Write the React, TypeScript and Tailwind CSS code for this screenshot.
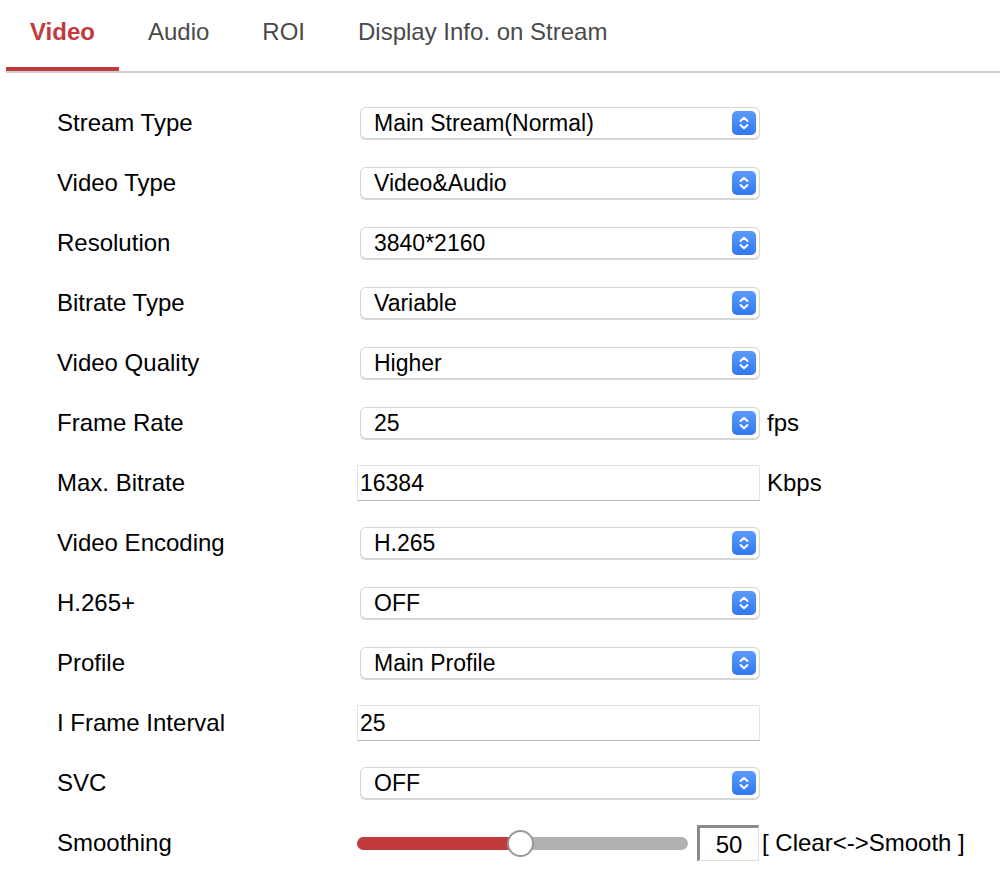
import React from "react";

const tabs = ["Video", "Audio", "ROI", "Display Info. on Stream"];

type Row =
  | { label: string; kind: "select"; value: string; unit?: string }
  | { label: string; kind: "input"; value: string; unit?: string }
  | { label: string; kind: "slider"; value: number };

const rows: Row[] = [
  { label: "Stream Type", kind: "select", value: "Main Stream(Normal)" },
  { label: "Video Type", kind: "select", value: "Video&Audio" },
  { label: "Resolution", kind: "select", value: "3840*2160" },
  { label: "Bitrate Type", kind: "select", value: "Variable" },
  { label: "Video Quality", kind: "select", value: "Higher" },
  { label: "Frame Rate", kind: "select", value: "25", unit: "fps" },
  { label: "Max. Bitrate", kind: "input", value: "16384", unit: "Kbps" },
  { label: "Video Encoding", kind: "select", value: "H.265" },
  { label: "H.265+", kind: "select", value: "OFF" },
  { label: "Profile", kind: "select", value: "Main Profile" },
  { label: "I Frame Interval", kind: "input", value: "25" },
  { label: "SVC", kind: "select", value: "OFF" },
  { label: "Smoothing", kind: "slider", value: 50 },
];

const Stepper = () => (
  <span className="flex h-[24px] w-[24px] items-center justify-center rounded-[5px] bg-gradient-to-b from-[#5b9bfa] to-[#2f78f0]">
    <svg width="12" height="16" viewBox="0 0 12 16" fill="none">
      <path d="M2.5 6 L6 2.8 L9.5 6" stroke="white" strokeWidth="2" strokeLinecap="round" strokeLinejoin="round" />
      <path d="M2.5 10 L6 13.2 L9.5 10" stroke="white" strokeWidth="2" strokeLinecap="round" strokeLinejoin="round" />
    </svg>
  </span>
);

const Select = ({ value }: { value: string }) => (
  <div className="ml-[3px] flex h-[32px] w-[400px] items-center justify-between rounded-[6px] border border-[#d6d6d6] bg-white pl-[13px] pr-[3px] text-[23px] text-black shadow-[0_1px_1px_rgba(0,0,0,0.18)]">
    <span>{value}</span>
    <Stepper />
  </div>
);

const TextInput = ({ value }: { value: string }) => (
  <div className="flex h-[36px] w-[403px] items-center border border-[#e3e3e3] border-b-[#b9b9b9] bg-white pl-[2px] text-[23px] text-black">
    {value}
  </div>
);

const Slider = ({ value }: { value: number }) => (
  <div className="flex items-center">
    <div className="relative h-[13px] w-[331px] rounded-full bg-[#b1b1b1]">
      <div className="absolute left-0 top-0 h-full w-[160px] rounded-full bg-[#c13b3d]" />
      <div className="absolute left-[150px] top-[-7px] h-[27px] w-[27px] rounded-full border-2 border-[#999] bg-white" />
    </div>
    <div className="ml-[9px] flex h-[36px] w-[62px] items-center justify-center border-l-[3px] border-t-[3px] border-r border-b border-l-[#8a8a8a] border-t-[#8a8a8a] border-r-[#dedede] border-b-[#dedede] bg-white pt-[1px] text-[24px] text-black">
      {value}
    </div>
    <span className="ml-[3px] text-[24px] text-black">[ Clear&lt;-&gt;Smooth ]</span>
  </div>
);

export default function App() {
  return (
    <div className="min-h-[892px] w-[1000px] bg-white" style={{ fontFamily: '"Liberation Sans", Arial, sans-serif' }}>
      <div className="ml-[6px] border-b-2 border-[#cfcfcf]">
        <div className="flex">
          {tabs.map((t, i) => (
            <div
              key={t}
              className={
                i === 0
                  ? "flex h-[71px] items-center border-b-4 border-[#c13b3d] px-[24px] pb-[4px] text-[24px] font-bold text-[#c13b3d]"
                  : "ml-[5px] flex h-[71px] items-center px-[24px] pb-[8px] text-[24px] text-[#4a4a4a]"
              }
            >
              {t}
            </div>
          ))}
        </div>
      </div>

      <div className="pt-[20px]">
        {rows.map((r) => (
          <div key={r.label} className="flex h-[60px] items-center">
            <div className="w-[357px] pl-[57px] text-[24px] text-black">{r.label}</div>
            {r.kind === "select" && <Select value={r.value} />}
            {r.kind === "input" && <TextInput value={r.value} />}
            {r.kind === "slider" && <Slider value={r.value} />}
            {"unit" in r && r.unit && (
              <span className="ml-[7px] text-[24px] text-black">{r.unit}</span>
            )}
          </div>
        ))}
      </div>
    </div>
  );
}
